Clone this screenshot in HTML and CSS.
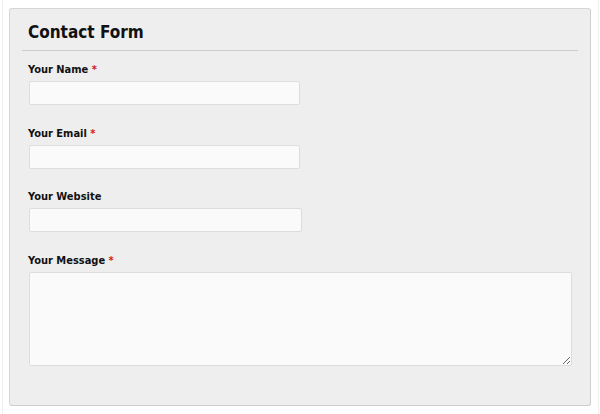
FILE: index.html
```html
<!DOCTYPE html>
<html lang="en">

<head>
     <meta charset="UTF-8">
     <meta name="viewport" content="width=device-width, initial-scale=1.0">
     <title>Contact Form</title>
     <link rel="stylesheet" href="styles.css">
</head>

<body>
     <div class="page">
          <div class="panel">
               <h2 class="title">Contact Form</h2>
               <form class="form" method="post">
                    <div class="field">
                         <label for="name">Your Name <span class="req">*</span></label>
                         <input type="text" id="name" class="short">
                    </div>
                    <div class="field">
                         <label for="email">Your Email <span class="req">*</span></label>
                         <input type="email" id="email" class="short">
                    </div>
                    <div class="field">
                         <label for="website">Your Website</label>
                         <input type="text" id="website" class="short wide">
                    </div>
                    <div class="field">
                         <label for="message">Your Message <span class="req">*</span></label>
                         <textarea id="message"></textarea>
                    </div>
               </form>
          </div>
     </div>
</body>

</html>
```

FILE: styles.css
```css
body {
     margin: 0;
     background: #ffffff;
     font-family: Tahoma, "DejaVu Sans Condensed", "DejaVu Sans", sans-serif;
     color: #111111;
}

.page {
     margin: 0 1px 0 2px;
     padding: 8px 7px 8px 6px;
     border-left: 1px solid #f0f0f0;
     border-right: 1px solid #f0f0f0;
     height: 414px;
     box-sizing: border-box;
}

.panel {
     background: #eeeeee;
     border: 1px solid #d6d6d6;
     border-right-color: #cfcfcf;
     border-bottom-color: #cfcfcf;
     border-radius: 3px;
     height: 398px;
     box-sizing: border-box;
     padding: 0 12px;
}

.title {
     margin: 0;
     padding: 12px 0 7px 6px;
     font-size: 17px;
     line-height: 22px;
     font-weight: bold;
     border-bottom: 1px solid #cccccc;
}

.form {
     padding: 11px 0 0 6px;
}

.field {
     margin-bottom: 20.5px;
}

label {
     display: block;
     font-size: 11px;
     line-height: 15px;
     font-weight: bold;
     margin-bottom: 4px;
}

.req {
     color: #cc2222;
}

input,
textarea {
     display: block;
     box-sizing: border-box;
     margin: 0 0 0 1px;
     background: #fafafa;
     border: 1px solid #dddddd;
     border-radius: 2px;
     font-family: inherit;
     font-size: 12px;
}

input {
     width: 271px;
     height: 24px;
}

input.wide {
     width: 273px;
}

textarea {
     width: 543px;
     height: 94px;
}
```
